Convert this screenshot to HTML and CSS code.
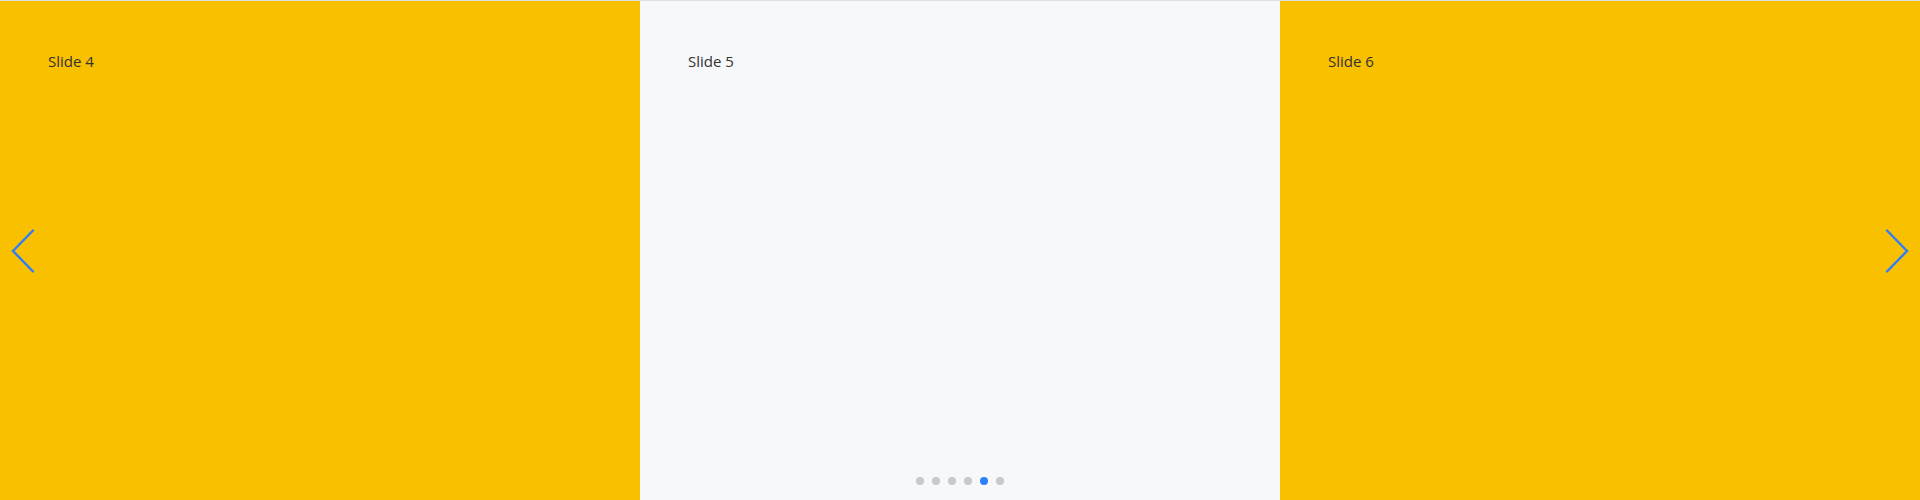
FILE: index.html
```html
<!DOCTYPE html>
<html lang="en">
<head>
<meta charset="utf-8">
<title>Swiper</title>
<link rel="stylesheet" href="styles.css">
</head>
<body>
<div class="swiper">
  <div class="track">
    <div class="slide slide-yellow">Slide 4</div>
    <div class="slide slide-light">Slide 5</div>
    <div class="slide slide-yellow">Slide 6</div>
  </div>
  <button class="nav nav-prev" aria-label="Previous">
    <svg width="24" height="44" viewBox="0 0 24 44"><polyline points="22,1.5 2,22 22,42.5" fill="none" stroke="#2d7ff9" stroke-width="2.4" stroke-linecap="round" stroke-linejoin="miter"/></svg>
  </button>
  <button class="nav nav-next" aria-label="Next">
    <svg width="24" height="44" viewBox="0 0 24 44"><polyline points="2,1.5 22,22 2,42.5" fill="none" stroke="#2d7ff9" stroke-width="2.4" stroke-linecap="round" stroke-linejoin="miter"/></svg>
  </button>
  <div class="dots">
    <span class="dot"></span>
    <span class="dot"></span>
    <span class="dot"></span>
    <span class="dot"></span>
    <span class="dot active"></span>
    <span class="dot"></span>
  </div>
</div>
</body>
</html>
```
FILE: styles.css
```css
html, body {
  margin: 0;
  padding: 0;
  height: 500px;
  overflow: hidden;
  background: #ffffff;
}
body {
  font-family: "Open Sans", "Noto Sans", "Liberation Sans", sans-serif;
}
.swiper {
  position: relative;
  width: 1920px;
  height: 500px;
  border-top: 1px solid #dedfe2;
  box-sizing: border-box;
  overflow: hidden;
}
.track {
  display: flex;
  height: 100%;
}
.slide {
  flex: 0 0 640px;
  box-sizing: border-box;
  padding: 50px 48px;
  font-size: 15px;
  line-height: 20px;
  color: #323233;
}
.slide-yellow {
  background: #f9c000;
}
.slide-light {
  background: #f7f8fa;
}
.nav {
  position: absolute;
  top: 228px;
  width: 24px;
  height: 44px;
  padding: 0;
  border: 0;
  background: transparent;
  cursor: pointer;
  display: flex;
}
.nav-prev {
  left: 11px;
}
.nav-next {
  right: 11px;
}
.dots {
  position: absolute;
  left: 0;
  right: 0;
  bottom: 15px;
  display: flex;
  justify-content: center;
  gap: 8px;
}
.dot {
  width: 8px;
  height: 8px;
  border-radius: 50%;
  background: #c8c9cc;
}
.dot.active {
  background: #2d7ff9;
}
```
